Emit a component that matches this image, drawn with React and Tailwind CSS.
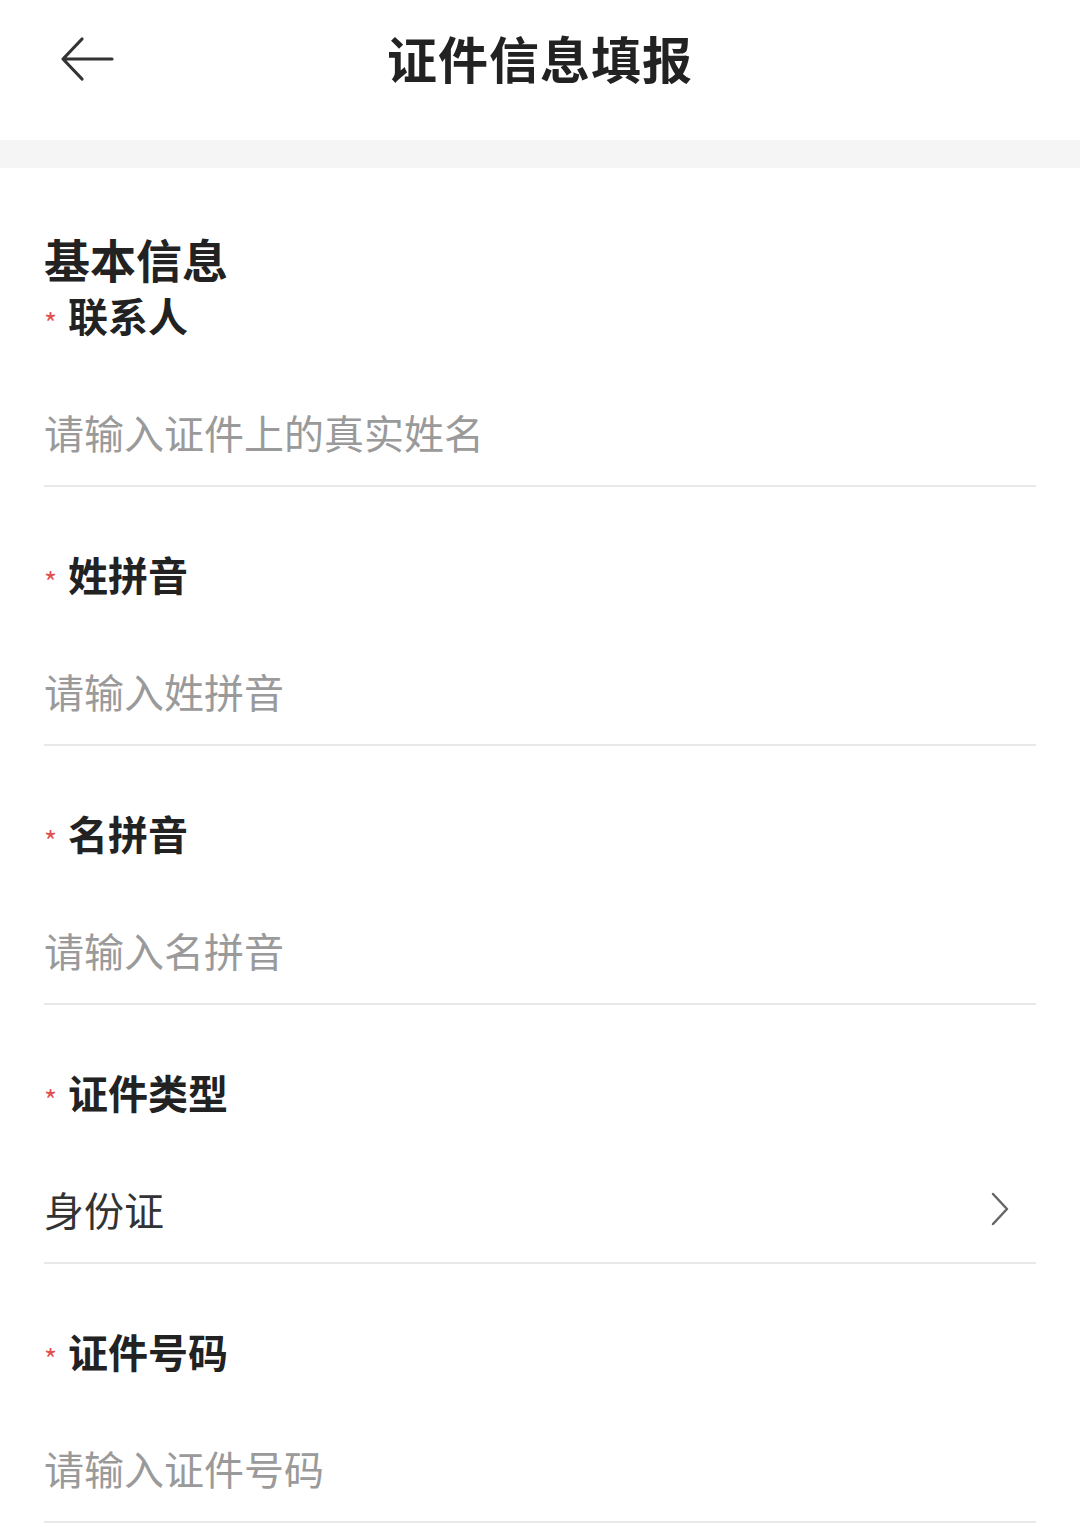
const fontStack = { fontFamily: '"Noto Sans CJK SC", "Noto Sans", sans-serif' };

const fields = [
  { label: "联系人", placeholder: "请输入证件上的真实姓名" },
  { label: "姓拼音", placeholder: "请输入姓拼音" },
  { label: "名拼音", placeholder: "请输入名拼音" },
  { label: "证件类型", value: "身份证", select: true },
  { label: "证件号码", placeholder: "请输入证件号码" },
];

const Field = ({ label, placeholder, value, select, first }) => {
  return (
    <div className={first ? "pt-[6px]" : "pt-[63px]"}>
      {/* Label */}
      <div className="flex items-center h-[48px]">
        <span className="w-[24px] text-[28px] leading-none text-[#e0524f] pt-[14px]">*</span>
        <span className="text-[40px] leading-[48px] font-bold text-[#222]">{label}</span>
      </div>

      {/* Input row */}
      <div className="mt-[69px] flex items-center justify-between h-[48px]">
        {value ? (
          <span className="text-[40px] leading-[48px] text-[#333]">{value}</span>
        ) : (
          <span className="text-[40px] leading-[48px] text-[#9a9a9a]">{placeholder}</span>
        )}
        {select && (
          <svg width="20" height="34" viewBox="0 0 20 34" className="mr-[26px]">
            <path d="M3 2 L17 17 L3 32" fill="none" stroke="#666" strokeWidth="2.5" strokeLinecap="round" strokeLinejoin="round" />
          </svg>
        )}
      </div>
      <div className="mt-[29px] h-[2px] bg-[#e8e8e8]"></div>
    </div>
  );
};

const App = () => {
  return (
    <div className="w-[1080px] h-[1536px] bg-white overflow-hidden" style={fontStack}>
      {/* Header */}
      <header className="relative h-[140px] flex items-start justify-center">
        <button className="absolute left-[60px] top-[36px] p-0">
          <svg width="54" height="46" viewBox="0 0 54 46">
            <path d="M52 23 H4 M22 3 L3 23 L22 43" fill="none" stroke="#333" strokeWidth="3.2" strokeLinecap="round" strokeLinejoin="round" />
          </svg>
        </button>
        <h1 className="mt-[29px] text-[50px] leading-[56px] font-bold text-[#222] tracking-[1px]">证件信息填报</h1>
      </header>
      <div className="h-[28px] bg-[#f5f5f5]"></div>

      {/* Form */}
      <section className="px-[44px] pt-[63px]">
        <h2 className="text-[46px] leading-[54px] font-bold text-[#222]">基本信息</h2>
        {fields.map((f, i) => (
          <Field key={f.label} {...f} first={i === 0} />
        ))}
      </section>
    </div>
  );
};

export default App;
